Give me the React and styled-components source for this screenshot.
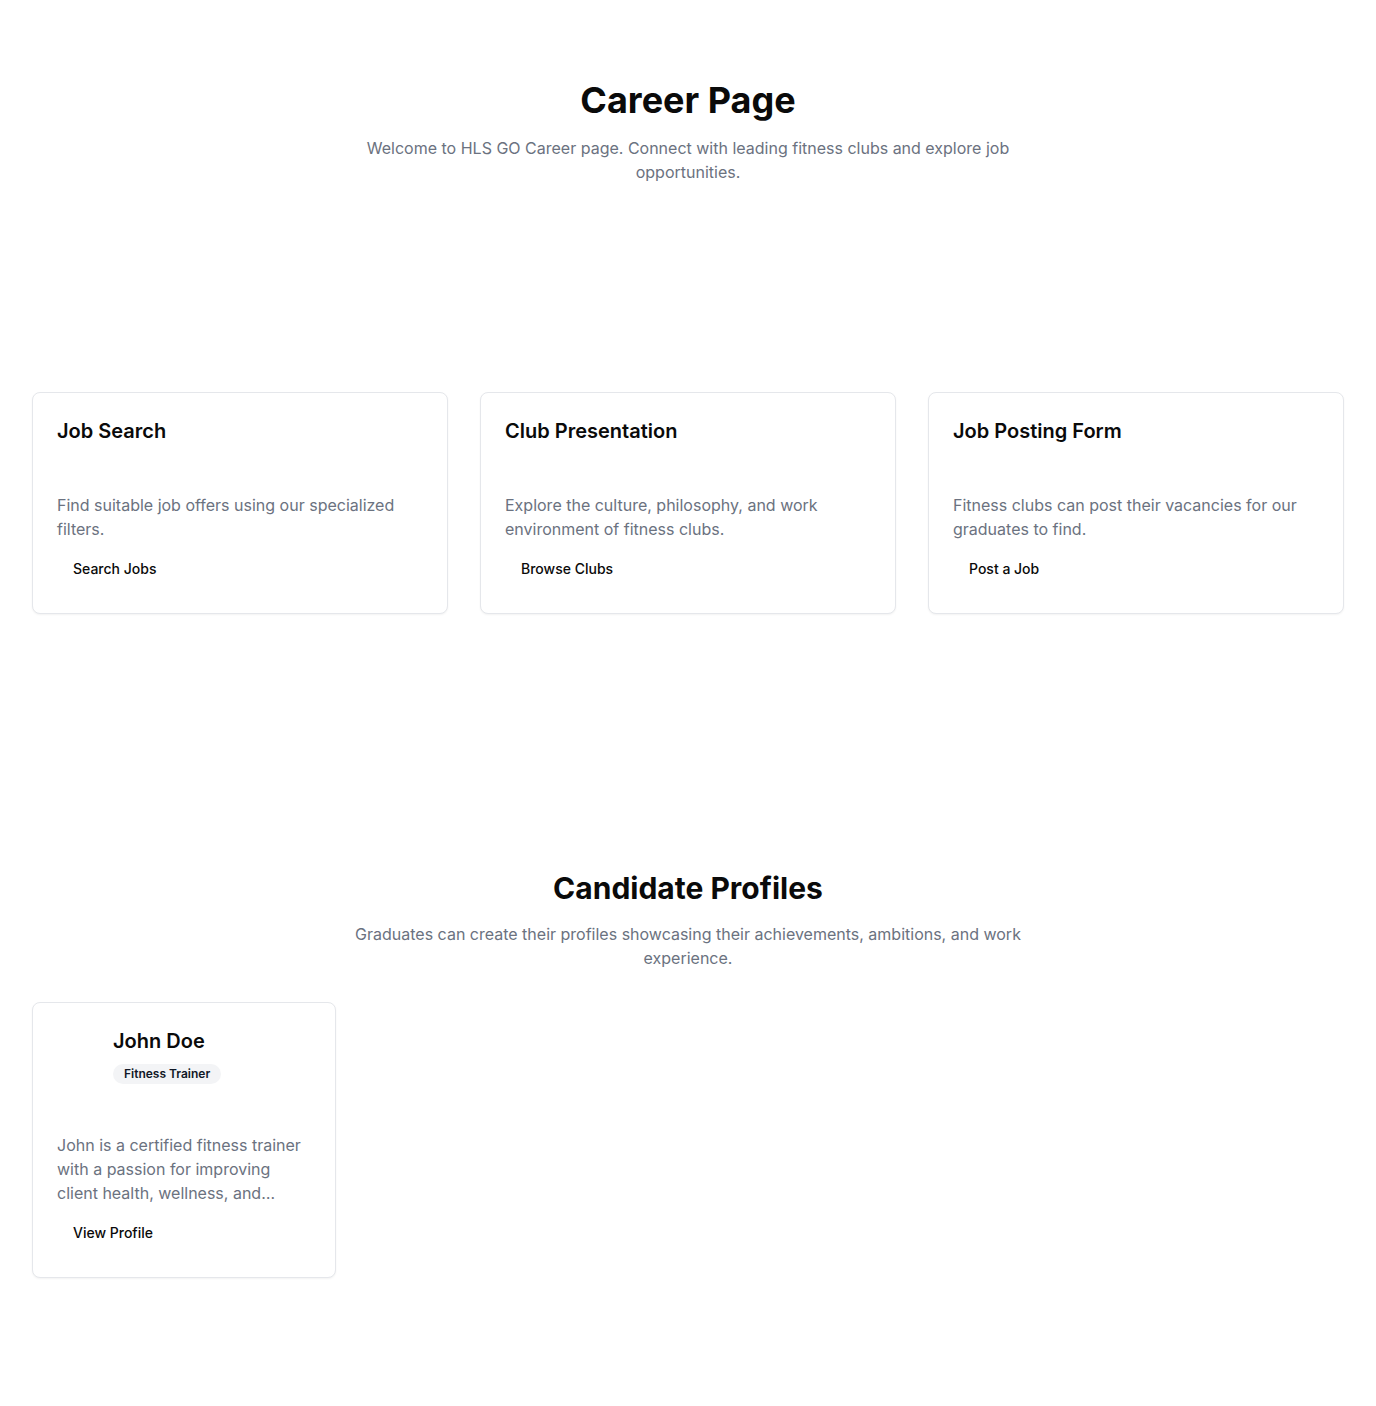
import React from "react";
import styled, { createGlobalStyle } from "styled-components";

const GlobalStyle = createGlobalStyle`
  * { box-sizing: border-box; }
  body {
    margin: 0;
    background: #ffffff;
    font-family: Inter, "Noto Sans", sans-serif;
    color: #0a0a0a;
  }
`;

const Page = styled.main`
  padding: 0 32px 128px;
`;

const Hero = styled.section`
  padding-top: ${(p) => p.top}px;
  text-align: center;
`;

const Title = styled.h1`
  margin: 0 0 16px;
  font-size: ${(p) => (p.small ? "30px" : "36px")};
  line-height: ${(p) => (p.small ? "36px" : "40px")};
  font-weight: 700;
  color: #0a0a0a;
`;

const Lead = styled.p`
  margin: 0 auto;
  max-width: 672px;
  font-size: 16px;
  line-height: 24px;
  color: #6b7280;
`;

const Grid = styled.div`
  display: grid;
  grid-template-columns: repeat(${(p) => p.cols}, 1fr);
  gap: 32px;
  margin-top: ${(p) => p.top}px;
`;

const Card = styled.div`
  border: 1px solid #e5e7eb;
  border-radius: 8px;
  background: #fff;
  box-shadow: 0 1px 2px rgba(0, 0, 0, 0.05);
  padding: 24px 24px 25px;
`;

const CardHead = styled.div`
  display: flex;
  gap: 16px;
  padding-bottom: ${(p) => p.pad || 48}px;
`;

const Avatar = styled.span`
  width: 40px;
  height: 40px;
  flex-shrink: 0;
  border-radius: 50%;
`;

const CardTitle = styled.h3`
  margin: 0;
  font-size: 20px;
  line-height: 28px;
  font-weight: 600;
`;

const Badge = styled.span`
  display: inline-block;
  margin-top: 9px;
  padding: 2px 11px;
  border-radius: 999px;
  background: #f3f4f6;
  font-size: 12px;
  line-height: 16px;
  font-weight: 600;
  color: #111827;
`;

const Text = styled.p`
  margin: 0 0 7px;
  font-size: 16px;
  line-height: 24px;
  color: #6b7280;
  ${(p) =>
    p.clamp &&
    `
    display: -webkit-box;
    -webkit-line-clamp: ${p.clamp};
    -webkit-box-orient: vertical;
    overflow: hidden;
  `}
`;

const GhostButton = styled.button`
  height: 40px;
  padding: 0 16px;
  border: none;
  border-radius: 6px;
  background: transparent;
  font-family: inherit;
  font-size: 14px;
  font-weight: 500;
  color: #0a0a0a;
  cursor: pointer;
  &:hover { background: #f3f4f6; }
`;

const features = [
  {
    title: "Job Search",
    text: "Find suitable job offers using our specialized filters.",
    action: "Search Jobs",
  },
  {
    title: "Club Presentation",
    text: "Explore the culture, philosophy, and work environment of fitness clubs.",
    action: "Browse Clubs",
  },
  {
    title: "Job Posting Form",
    text: "Fitness clubs can post their vacancies for our graduates to find.",
    action: "Post a Job",
  },
];

const candidates = [
  {
    name: "John Doe",
    role: "Fitness Trainer",
    bio: "John is a certified fitness trainer with a passion for improving client health, wellness, and performance through tailored programs.",
  },
];

export default function App() {
  return (
    <>
      <GlobalStyle />
      <Page>
        <Hero top={80}>
          <Title>Career Page</Title>
          <Lead>
            Welcome to HLS GO Career page. Connect with leading fitness clubs and explore job
            opportunities.
          </Lead>
        </Hero>

        <Grid cols={3} top={208}>
          {features.map((f) => (
            <Card key={f.title}>
              <CardHead>
                <CardTitle>{f.title}</CardTitle>
              </CardHead>
              <Text>{f.text}</Text>
              <GhostButton>{f.action}</GhostButton>
            </Card>
          ))}
        </Grid>

        <Hero top={256}>
          <Title small>Candidate Profiles</Title>
          <Lead>
            Graduates can create their profiles showcasing their achievements, ambitions, and work
            experience.
          </Lead>
        </Hero>

        <Grid cols={4} top={32}>
          {candidates.map((c) => (
            <Card key={c.name}>
              <CardHead pad={49}>
                <Avatar />
                <div>
                  <CardTitle>{c.name}</CardTitle>
                  <Badge>{c.role}</Badge>
                </div>
              </CardHead>
              <Text clamp={3}>{c.bio}</Text>
              <GhostButton>View Profile</GhostButton>
            </Card>
          ))}
        </Grid>
      </Page>
    </>
  );
}
